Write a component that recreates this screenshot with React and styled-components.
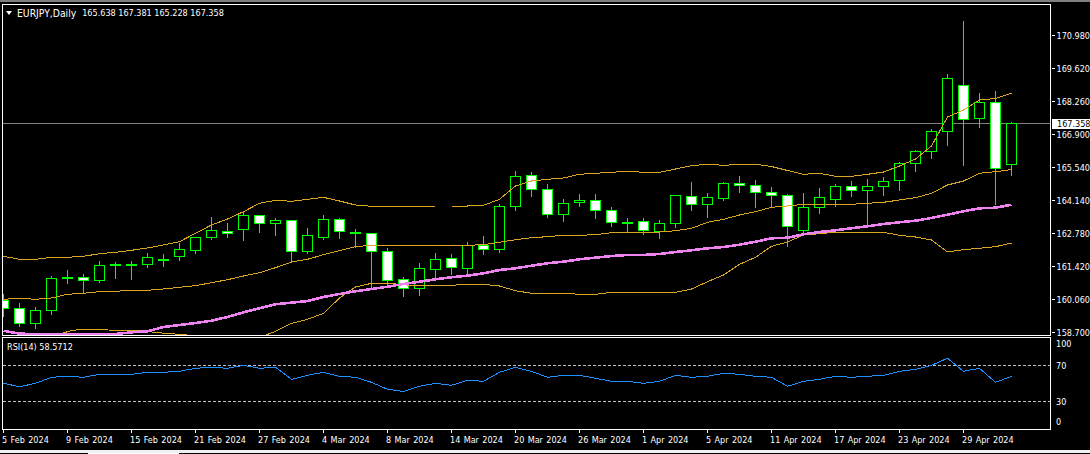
import React from 'react'
import styled, { createGlobalStyle } from 'styled-components'

const UI_FONT = '"DejaVu Sans Condensed", "DejaVu Sans", sans-serif'

const GlobalStyle = createGlobalStyle`
   html, body {
      margin: 0;
      padding: 0;
      background: #000;
   }
`

// [high, bodyTop, bodyBottom, low, filled] in screen pixels, one every 16px from x=3
const CANDLES = [
   [294, 300, 308, 316, 1], [303, 308, 323, 326, 1], [307, 310, 323, 328, 0], [276, 278, 310, 314, 0],
   [270, 277, 278, 283, 0], [274, 277, 280, 292, 1], [261, 265, 280, 282, 0], [262, 264, 265, 278, 0],
   [261, 264, 264, 279, 0], [253, 257, 264, 267, 0], [254, 259, 260, 266, 0], [243, 249, 256, 260, 0],
   [237, 237, 250, 253, 0], [217, 230, 237, 239, 0], [223, 231, 233, 237, 1], [211, 215, 229, 240, 0],
   [215, 215, 223, 232, 1], [218, 220, 223, 235, 0], [220, 220, 251, 261, 1], [228, 235, 251, 253, 0],
   [215, 219, 237, 239, 0], [218, 219, 231, 238, 1], [229, 232, 233, 247, 0], [233, 233, 251, 288, 1],
   [248, 251, 280, 286, 1], [277, 279, 288, 296, 1], [263, 268, 288, 295, 0], [253, 259, 269, 278, 0],
   [254, 258, 267, 274, 1], [242, 245, 268, 274, 0], [236, 245, 249, 254, 1], [204, 206, 249, 252, 0],
   [171, 176, 206, 210, 0], [172, 175, 189, 196, 1], [184, 189, 214, 217, 1], [199, 203, 214, 221, 0],
   [194, 200, 202, 206, 0], [194, 200, 210, 218, 1], [207, 210, 222, 226, 1], [218, 222, 223, 231, 0],
   [218, 221, 230, 234, 1], [220, 223, 231, 238, 0], [195, 195, 223, 227, 0], [182, 196, 204, 210, 1],
   [193, 197, 204, 217, 0], [182, 183, 198, 200, 0], [176, 183, 185, 192, 1], [180, 185, 192, 207, 1],
   [187, 192, 195, 206, 1], [194, 195, 226, 246, 1], [193, 207, 230, 233, 0], [188, 197, 207, 213, 0],
   [184, 186, 199, 206, 0], [181, 186, 190, 196, 1], [179, 186, 190, 226, 0], [177, 181, 186, 195, 0],
   [162, 163, 180, 190, 0], [150, 151, 163, 171, 0], [129, 131, 151, 158, 0], [74, 78, 131, 145, 0],
   [21, 85, 119, 165, 1], [93, 102, 118, 127, 0], [91, 102, 168, 204, 1], [122, 123, 164, 175, 0],
]

const UPPER_BAND = [
   256.3, 259.3, 259.3, 257.3, 257.3, 256.3, 253.7, 252.3, 250.3, 248, 245, 241.7, 233.3, 225, 219, 211.7,
   203.3, 200.3, 201.3, 199.3, 197.3, 201, 205, 206.3, 206.3, 206.3, 206.3, 206, 206, 206, 205.3, 199.3,
   186, 181, 179.3, 178, 174.3, 173.3, 172.3, 171.3, 172.3, 172.3, 169, 165.7, 164.3, 165.3, 164.5, 164.3,
   166.5, 170.5, 174.3, 173.3, 176.3, 176.3, 174.3, 172, 166, 159, 146, 117, 110, 100, 98.5, 93.3,
]

const MIDDLE_BAND = [
   299.3, 298.3, 299.3, 298, 294.3, 293.3, 291.7, 291.3, 290.3, 290.3, 289, 287.3, 285.7, 282.7, 279.7, 276,
   272.7, 267.7, 262, 259.3, 254.7, 250.7, 246.7, 245.3, 245.3, 245.3, 245.3, 245.3, 245.3, 245.3, 244.7, 242.3,
   239.7, 237.7, 236.7, 235.3, 235.3, 234.7, 232.7, 232.3, 232.3, 232, 230.7, 228.3, 222.3, 219.3, 215, 211.7,
   207.3, 206, 204.3, 204.3, 204.3, 204.3, 203.3, 202.3, 200, 197.7, 193.3, 185, 181, 173.3, 171.7, 169.5,
]

// lower band runs off the bottom of the pane in february, so it comes in two pieces
const LOWER_BAND_EARLY = '63,333 70,331 79,329.5 108,330 140,330.5 156,332.5 168,333.5 175,334 187,334.5'
const LOWER_BAND = [
   331.3, 323.3, 319.3, 313.3, 298, 287, 283.3, 283.3, 284.7, 286, 285.3, 285.3, 284.3, 284.3, 286, 290.7,
   293.3, 293.3, 293.3, 294.3, 294.3, 292.3, 292.3, 292.3, 292.3, 292.3, 289, 281.7, 275, 264.3, 257.3, 246.3,
   242, 235, 233.7, 232.3, 232.3, 232.3, 232.3, 235.3, 237, 240, 252, 249.7, 248.3, 246.7, 243,
]

const MOVING_AVERAGE = [
   330.7, 333.7, 334, 334, 334, 334, 334, 334, 332.3, 331.3, 327, 325, 323, 320.7, 317, 312.3,
   308.3, 304.3, 302.7, 301, 297, 294, 291.3, 289, 286.7, 284, 281.7, 279.3, 277.3, 275.7, 273.3, 270,
   268.3, 265.7, 263.3, 261.7, 259.3, 257.7, 256, 255, 255, 254, 252, 250.3, 248.3, 247, 244.7, 241.7,
   238.3, 237.7, 234.3, 232, 230.3, 228.3, 226.3, 224, 222.3, 220.7, 218, 214.7, 211.3, 208.3, 207.7, 204.7,
]

const RSI = [
   383.3, 386.7, 383.3, 377.3, 376.3, 377.3, 374.3, 374.3, 374.3, 372.3, 372.3, 371.3, 368.3, 367.3, 368.3, 365.3,
   368.3, 367.3, 379.3, 375.3, 372.3, 376.3, 377.3, 382.3, 389.3, 391.5, 386.3, 383.3, 385.3, 380.3, 381.3, 372.3,
   367.3, 371.3, 377.3, 375.3, 375.3, 378.3, 381.3, 381.3, 383.3, 381.3, 375.3, 377.3, 376.3, 373.3, 374.3, 376.3,
   377.3, 386.3, 381.3, 379.3, 376.3, 377.3, 376.3, 375.3, 371.3, 369.3, 365.3, 358.3, 371.3, 368.3, 382.3, 376.3,
]

const PRICES = ['170.980', '169.620', '168.260', '166.900', '165.540', '164.140', '162.780', '161.420', '160.060', '158.700']
const DATES = [
   '5 Feb 2024', '9 Feb 2024', '15 Feb 2024', '21 Feb 2024', '27 Feb 2024', '4 Mar 2024', '8 Mar 2024', '14 Mar 2024',
   '20 Mar 2024', '26 Mar 2024', '1 Apr 2024', '5 Apr 2024', '11 Apr 2024', '17 Apr 2024', '23 Apr 2024', '29 Apr 2024',
]

const barX = i => 3.5 + 16 * i
const toPoints = (values, from = 0) => values.map((y, i) => `${barX(i + from)},${y}`).join(' ')

const Screen = styled.div`
   width: 1090px;
   height: 454px;
   display: flex;
   flex-direction: column;
   overflow: hidden;
   background: #000;
   color: #fff;
   font-family: ${UI_FONT};
   font-size: 9px;
`
const TopStrip = styled.div`
   height: 2px;
   margin-bottom: 2px;
   background: #7f7f7f;
`
const PaneRow = styled.div`
   display: flex;
   align-items: flex-start;
   padding-left: 2px;
   margin-bottom: ${props => props.$below || 0}px;
`
const Pane = styled.div`
   position: relative;
   width: 1049px;
   height: ${props => props.$height}px;
   box-sizing: border-box;
   border: 1px solid #fff;
`
const ChartSvg = styled.svg`
   display: block;
   width: 1047px;
   height: 100%;
   shape-rendering: crispEdges;
`
const Legend = styled.div`
   position: absolute;
   top: ${props => props.$top}px;
   left: ${props => props.$left}px;
   display: flex;
   align-items: center;
   gap: 5px;
   line-height: 12px;
   white-space: pre;
`
const Symbol = styled.span`
   margin-right: 1px;
   font-size: 10.3px;
`
const Arrow = styled.span`
   width: 0;
   height: 0;
   border-left: 3.5px solid transparent;
   border-right: 3.5px solid transparent;
   border-top: 4px solid #fff;
`
const Wick = styled.line`
   stroke: #0f0;
   stroke-width: 1;
`
const Body = styled.rect`
   stroke: #0f0;
   stroke-width: 1;
   fill: ${props => (props.$filled ? '#fff' : '#000')};
`
const PriceLine = styled.line`
   stroke: #808080;
   stroke-width: 1;
`
const Level = styled.line`
   stroke: #c0c0c0;
   stroke-width: 1;
   stroke-dasharray: 3 2;
`
const Curve = styled.polyline`
   fill: none;
   stroke: ${props => props.$color};
   stroke-width: ${props => props.$width || 1};
`
const PriceAxis = styled.div`
   position: relative;
   width: 39px;
   height: 332px;
   padding-top: 15px;
   box-sizing: border-box;
`
const PriceRow = styled.div`
   display: flex;
   align-items: center;
   gap: 2px;
   height: 33px;
   padding-left: 1px;
   line-height: 12px;
`
const TickMark = styled.span`
   width: 3px;
   height: 1px;
   background: #fff;
`
const PriceTag = styled.div`
   position: absolute;
   top: 115px;
   left: 1px;
   width: 38px;
   height: 10px;
   padding-left: 5px;
   box-sizing: border-box;
   background: #fff;
   color: #000;
   line-height: 10px;
`
const RsiAxis = styled.div`
   display: grid;
   grid-template-rows: 21.5px 36px 20.5px 12px;
   width: 39px;
   padding: 1px 0 0 5px;
   box-sizing: border-box;
   line-height: 12px;
`
const DateAxis = styled.div`
   display: flex;
   height: 20px;
   padding-left: 3px;
`
const DateCell = styled.div`
   display: flex;
   flex-direction: column;
   flex: 0 0 64px;
`
const DateTick = styled.span`
   width: 1px;
   height: 3px;
   background: #fff;
`
const DateLabel = styled.span`
   margin: 1px 0 0 -1px;
   line-height: 12px;
   word-spacing: 0.8px;
   white-space: nowrap;
`
const BottomStrip = styled.div`
   height: 2px;
   background: #f0f0f0;
`
const TabBar = styled.div`
   display: flex;
   height: 2px;
`
const Tab = styled.div`
   flex: ${props => (props.$width ? `0 0 ${props.$width}px` : '1')};
   box-sizing: border-box;
   background: ${props => (props.$active ? '#fff' : '#000')};
   border-top: 1px solid #f0f0f0;
`

const Candle = ({ index, high, top, bottom, low, filled }) => {
   const x = barX(index)
   return (
      <>
         <Wick x1={x} x2={x} y1={high} y2={low + 1} />
         <Body x={x - 5} y={top + 0.5} width={10} height={Math.max(bottom - top, 1)} $filled={filled} />
      </>
   )
}

const App = () => (
   <Screen>
      <GlobalStyle />
      <TopStrip />
      <PaneRow $below={1}>
         <Pane $height={332}>
            <ChartSvg viewBox="3 5 1047 330">
               <PriceLine x1={3} x2={1050} y1={123.5} y2={123.5} />
               {CANDLES.map(([high, top, bottom, low, filled], i) => (
                  <Candle key={i} index={i} high={high} top={top} bottom={bottom} low={low} filled={filled} />
               ))}
               <Curve $color="#daa520" points={toPoints(UPPER_BAND)} />
               <Curve $color="#daa520" points={toPoints(MIDDLE_BAND)} />
               <Curve $color="#daa520" points={LOWER_BAND_EARLY} />
               <Curve $color="#daa520" points={`266,335 ${toPoints(LOWER_BAND, 17)}`} />
               <Curve $color="#ee82ee" $width={2.6} points={toPoints(MOVING_AVERAGE)} />
            </ChartSvg>
            <Legend $top={2} $left={3}>
               <Arrow />
               <Symbol>EURJPY,Daily</Symbol>
               <span>165.638 167.381 165.228 167.358</span>
            </Legend>
         </Pane>
         <PriceAxis>
            {PRICES.map(price => (
               <PriceRow key={price}>
                  <TickMark />
                  <span>{price}</span>
               </PriceRow>
            ))}
            <PriceTag>167.358</PriceTag>
         </PriceAxis>
      </PaneRow>
      <PaneRow>
         <Pane $height={93}>
            <ChartSvg viewBox="3 338 1047 91">
               <Level x1={3} x2={1050} y1={365.5} y2={365.5} />
               <Level x1={3} x2={1050} y1={401.5} y2={401.5} />
               <Curve $color="#1e90ff" points={toPoints(RSI)} />
            </ChartSvg>
            <Legend $top={3} $left={4}>
               <span>RSI(14) 58.5712</span>
            </Legend>
         </Pane>
         <RsiAxis>
            <span>100</span>
            <span>70</span>
            <span>30</span>
            <span>0</span>
         </RsiAxis>
      </PaneRow>
      <DateAxis>
         {DATES.map(date => (
            <DateCell key={date}>
               <DateTick />
               <DateLabel>{date}</DateLabel>
            </DateCell>
         ))}
      </DateAxis>
      <BottomStrip />
      <TabBar>
         <Tab $width={88} />
         <Tab $width={91} $active />
         <Tab />
      </TabBar>
   </Screen>
)

export default App
